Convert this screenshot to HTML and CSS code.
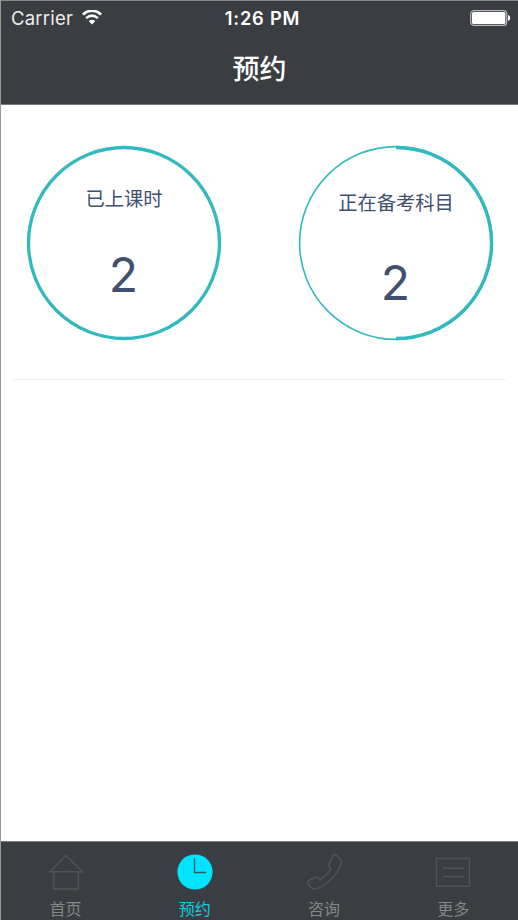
FILE: index.html
```html
<!DOCTYPE html>
<html lang="zh-CN">
<head>
<meta charset="utf-8">
<title>预约</title>
<link rel="stylesheet" href="styles.css">
</head>
<body>
<div class="app">
  <header class="header">
    <div class="status">
      <div class="carrier">
        <span>Carrier</span>
        <svg class="wifi" width="20" height="15" viewBox="0 0 20 15">
          <path d="M.9 4.4Q10-3.2 19.1 4.4" fill="none" stroke="#fff" stroke-width="2.6"/>
          <path d="M4.1 8.1Q10 3.2 15.9 8.1" fill="none" stroke="#fff" stroke-width="2.5"/>
          <path d="M6.7 11.1Q10 8.3 13.3 11.1L10 14.6Z" fill="#fff"/>
        </svg>
      </div>
      <time class="time">1:26 PM</time>
      <svg class="battery" width="41" height="16" viewBox="0 0 41 16">
        <rect x=".7" y=".7" width="36" height="14.6" rx="3" fill="none" stroke="#b5b7b9" stroke-width="1.2"/>
        <rect x="2" y="2" width="33.4" height="12" rx="1.5" fill="#fff"/>
        <path d="M38 5Q40.2 5.5 40.2 8T38 11Z" fill="#fff"/>
      </svg>
    </div>
    <h1 class="title">预约</h1>
  </header>
  <main class="content">
    <section class="stats">
      <div class="stat">
        <svg class="ring" width="196" height="196" viewBox="0 0 196 196">
          <circle cx="98" cy="98" r="95.5"/>
        </svg>
        <span class="label">已上课时</span>
        <span class="value">2</span>
      </div>
      <div class="stat stat-exam">
        <svg class="ring" width="196" height="196" viewBox="0 0 196 196">
          <circle class="track" cx="98" cy="98" r="96.4"/>
          <path d="M98 2.5A95.5 95.5 0 0 1 98 193.5"/>
        </svg>
        <span class="label">正在备考科目</span>
        <span class="value">2</span>
      </div>
    </section>
    <hr class="divider">
  </main>
  <nav class="tabs">
    <a class="tab">
      <svg class="icon" width="36" height="36" viewBox="0 0 36 36"><path d="M1.5 17.8 18 1.6 34.5 17.8ZM5.7 17.8V35H30.2V17.8"/></svg>
      <span>首页</span>
    </a>
    <a class="tab active">
      <svg class="icon" width="36" height="36" viewBox="0 0 36 36"><circle cx="18" cy="18" r="17.6"/><path d="M17.5 4.2V18.5H29"/></svg>
      <span>预约</span>
    </a>
    <a class="tab">
      <svg class="icon" width="36" height="36" viewBox="0 0 36 36"><path d="M27 1.8Q29-.1 31 1.8L34 5Q36 7.5 34.5 11.5Q30 23 17.5 31.5Q11 35.5 7 34.8Q4.5 34 1.8 29.8Q.5 27.5 3.5 26L9.5 23.3Q11.2 22.7 12.3 24L14 25.7Q20.5 22 24.8 15L23.2 12.8Q22.5 11.8 23.2 10Z"/></svg>
      <span>咨询</span>
    </a>
    <a class="tab">
      <svg class="icon" width="36" height="36" viewBox="0 0 36 36"><path d="M1.5 4.5H34.5V32.3H1.5ZM8 14.2H29M8 22.5H29"/></svg>
      <span>更多</span>
    </a>
  </nav>
</div>
</body>
</html>
```
FILE: styles.css
```css
* {
  box-sizing: border-box;
}

body {
  margin: 0;
  background: #fff;
  font-family: Inter, "Noto Sans CJK SC", sans-serif;
}

.app {
  display: flex;
  flex-direction: column;
  height: 920px;
  border-left: 1px solid #999;
}

.header {
  height: 105px;
  background: #3a3d42;
  color: #fff;
  border-top: 1px solid #85878a;
  border-bottom: 1px solid #77797b;
}

.status {
  display: grid;
  grid-template-columns: 1fr auto 1fr;
  align-items: center;
  height: 33px;
  padding: 0 7px 0 10px;
}

.carrier {
  display: flex;
  align-items: center;
  gap: 9px;
  font-size: 18.5px;
  letter-spacing: 0.2px;
  color: #eee;
}

.time {
  padding-left: 3px;
  font-size: 18.3px;
  font-weight: 600;
  letter-spacing: 0.8px;
}

.battery {
  justify-self: end;
}

.title {
  margin: 16px 0 0;
  font-size: 27px;
  font-weight: 500;
  line-height: 40px;
  text-align: center;
}

.content {
  flex: 1;
}

.stats {
  display: flex;
  justify-content: space-between;
  padding: 40px 24px 0 25px;
}

.stat {
  position: relative;
  display: flex;
  flex-direction: column;
  align-items: center;
  width: 196px;
  height: 196px;
  padding-top: 39px;
  color: #40506f;
}

.stat-exam {
  padding-top: 43px;
}

.ring {
  position: absolute;
  inset: 0;
  fill: none;
  stroke: #32b9bf;
  stroke-width: 3.3;
}

.ring .track {
  stroke-width: 1.6;
}

.label {
  font-size: 19.3px;
  line-height: 30px;
}

.value {
  margin-top: 31px;
  margin-right: 1px;
  font-size: 48px;
  line-height: 60px;
}

.stat-exam .value {
  margin-top: 35px;
}

.divider {
  height: 1px;
  margin: 38px 12px 0;
  border: 0;
  background: #e9f5f5;
}

.tabs {
  display: flex;
  height: 79px;
  background: #3a3d42;
  border-top: 1px solid #77797b;
}

.tab {
  display: flex;
  flex: 1;
  flex-direction: column;
  align-items: center;
  padding-top: 12px;
  color: #858688;
  font-size: 16px;
  line-height: 24px;
}

.tab span {
  height: 23px;
  margin-top: 7px;
}

.icon {
  flex-shrink: 0;
  fill: none;
  stroke: #525558;
  stroke-width: 1.4;
}

.active {
  color: #10cce0;
}

.active circle {
  fill: #00e4ff;
  stroke: none;
}

.active path {
  stroke: #20636d;
}
```
